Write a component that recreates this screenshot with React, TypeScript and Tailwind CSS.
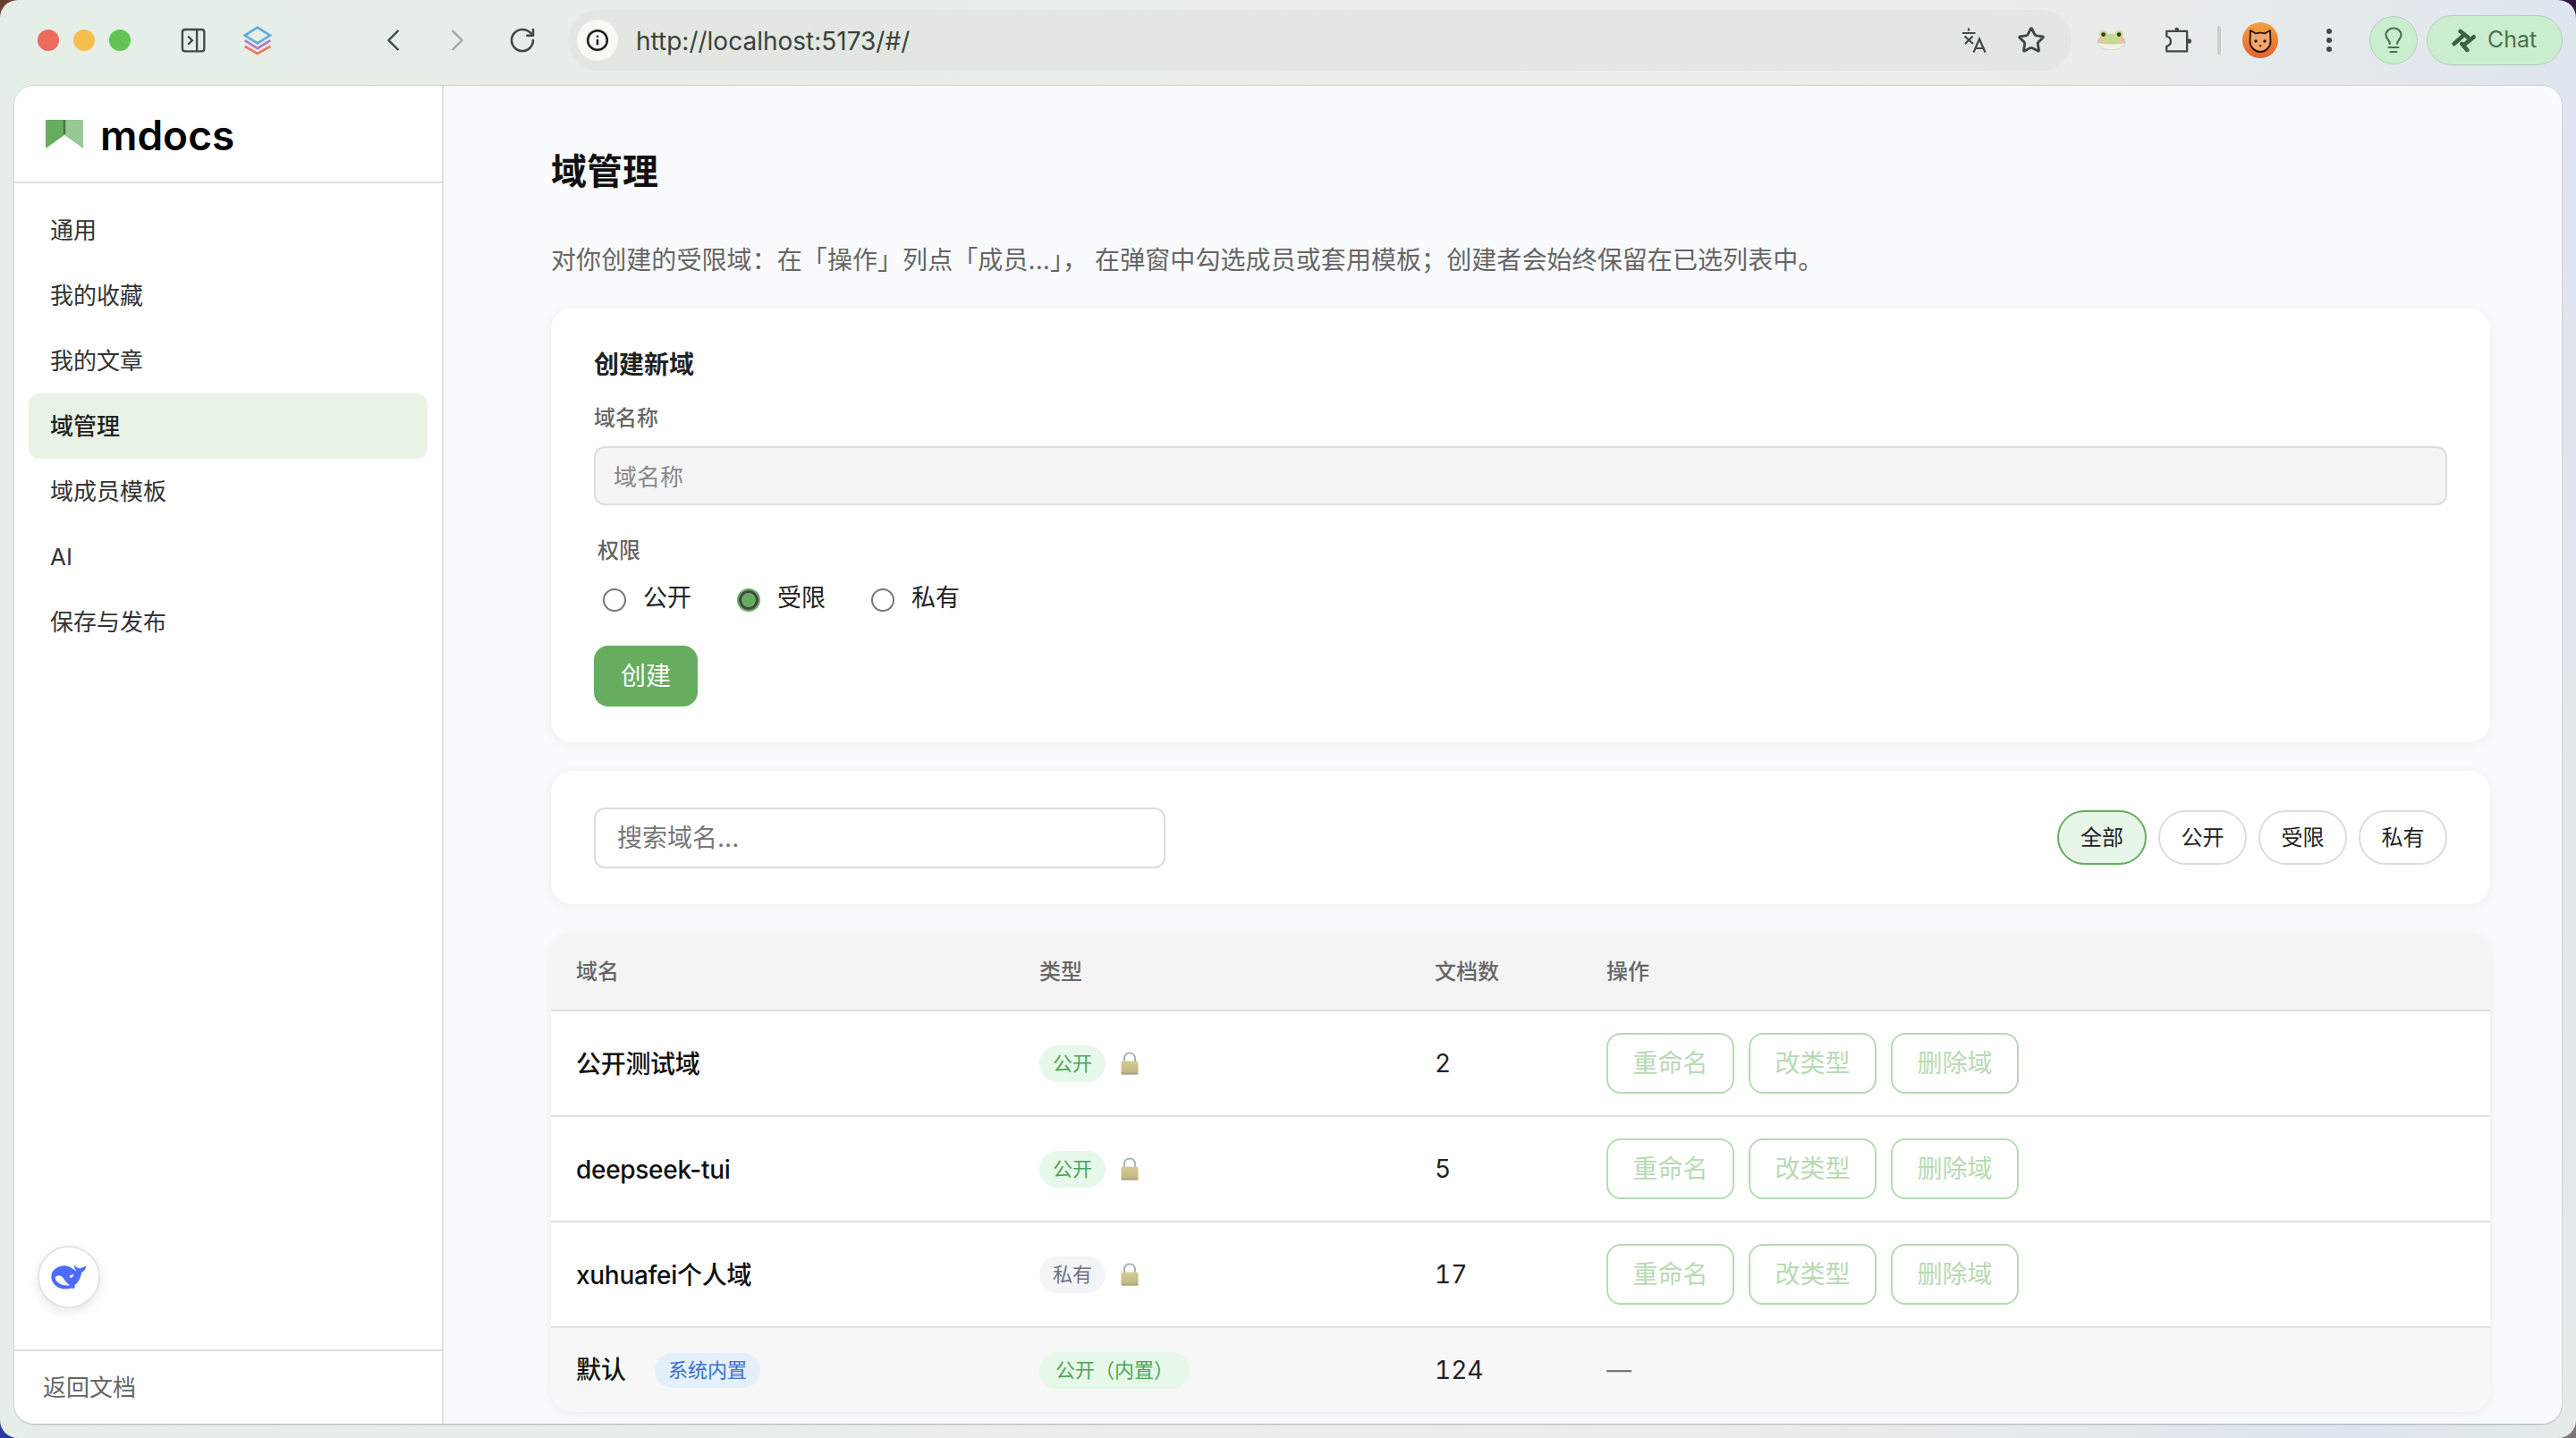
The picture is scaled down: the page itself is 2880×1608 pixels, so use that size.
import { Info, RotateCw, Star } from "lucide-react";

const navItems = ["通用", "我的收藏", "我的文章", "域管理", "域成员模板", "AI", "保存与发布"];

const domains = [
  { name: "公开测试域", type: "公开", isPublic: true, docs: "2" },
  { name: "deepseek-tui", type: "公开", isPublic: true, docs: "5" },
  { name: "xuhuafei个人域", type: "私有", isPublic: false, docs: "17" },
];

function SidebarToggleIcon() {
  return (
    <svg viewBox="35 35 85 85" className="w-[28px] h-[28px] ml-[56px]" fill="none" stroke="#3f4a40" strokeWidth="7">
      <rect x="41" y="41" width="74" height="74" rx="9" />
      <path d="M90 41V115" />
      <path d="M60 64L74 78L60 92" />
    </svg>
  );
}

function LayersIcon() {
  return (
    <svg viewBox="245 25 97 103" className="w-[32px] h-[34px] ml-[42px]" fill="none" strokeWidth="8">
      <path d="M293 33L336 60L293 87L250 60Z" stroke="#5eaee0" />
      <path d="M250 77L293 104L337 77" stroke="#b07cc6" />
      <path d="M250 97L293 122L337 97" stroke="#ee7a5f" />
    </svg>
  );
}

function TranslateIcon() {
  return (
    <svg viewBox="0 0 28 28" className="w-[28px] h-[28px] mr-[34px]" fill="none" stroke="#3f4a40" strokeWidth="2.2">
      <path d="M8 0.5V3.5M1 6H15.5" />
      <path d="M3.5 9.5L13 18M12.5 9.5L4 18" />
      <path d="M13.5 27.5L20 12.5L26.5 27.5M15.5 23H24.5" />
    </svg>
  );
}

function FrogIcon() {
  return (
    <svg viewBox="45 57 100 70" className="w-[33px] h-[23px] ml-[28px]">
      <circle cx="68" cy="74" r="14" fill="#c6d98f" />
      <circle cx="121" cy="74" r="14" fill="#c6d98f" />
      <ellipse cx="95" cy="98" rx="48" ry="27" fill="#c6d98f" />
      <path d="M47 100C62 108 128 108 143 100C140 118 118 126 95 126C72 126 50 118 47 100Z" fill="#f5f1e2" stroke="#c9ccb8" strokeWidth="2" />
      <circle cx="68" cy="74" r="7" fill="#2e3a22" />
      <circle cx="121" cy="74" r="7" fill="#2e3a22" />
      <ellipse cx="60" cy="94" rx="10" ry="7" fill="#f5b8b8" />
      <ellipse cx="130" cy="94" rx="10" ry="7" fill="#f5b8b8" />
    </svg>
  );
}

function PuzzleIcon() {
  return (
    <svg viewBox="270 40 95 95" className="w-[31px] h-[31px] ml-[43px]" fill="none" stroke="#3f4a40" strokeWidth="7">
      <path d="M277 58H347V127H277V109C296 106 296 80 277 76Z" strokeLinejoin="round" />
      <circle cx="312" cy="52" r="7" fill="#3f4a40" stroke="none" />
      <circle cx="354" cy="92" r="8" fill="#3f4a40" stroke="none" />
    </svg>
  );
}

function AvatarIcon() {
  return (
    <svg viewBox="0 0 40 40" className="w-[40px] h-[40px] ml-[24px]">
      <defs>
        <linearGradient id="avatarBg" x1="0" y1="0" x2="0" y2="1">
          <stop offset="0" stopColor="#f3a03f" />
          <stop offset="1" stopColor="#e6622d" />
        </linearGradient>
      </defs>
      <circle cx="20" cy="20" r="20" fill="url(#avatarBg)" />
      <path d="M9 9L15 12.5C18 11.5 22 11.5 25 12.5L31 9L31.5 22C31 28 26 33 20 33C14 33 9 28 8.5 22Z" fill="#f2a56c" stroke="#1f1510" strokeWidth="1.8" strokeLinejoin="round" />
      <circle cx="15" cy="21" r="1.7" fill="#1f1510" />
      <circle cx="25" cy="21" r="1.7" fill="#1f1510" />
      <path d="M18 25.5H22L20 27.5Z" fill="#1f1510" />
    </svg>
  );
}

function BulbIcon() {
  return (
    <svg viewBox="0 0 20 30" className="w-[20px] h-[30px]" fill="none" stroke="#4a7150" strokeWidth="2.2" strokeLinecap="round">
      <path d="M6 19C6 15 1.5 14 1.5 9C1.5 4.5 5.5 1.5 10 1.5C14.5 1.5 18.5 4.5 18.5 9C18.5 14 14 15 14 19" />
      <path d="M4.5 23H15.5M6.5 28H13.5" />
    </svg>
  );
}

function ChatIcon() {
  return (
    <svg viewBox="295 65 90 90" className="w-[30px] h-[30px] mr-[11px]" fill="none" stroke="#3f5f41" strokeWidth="14" strokeLinecap="round">
      <path d="M327 80L352 100" />
      <path d="M372 99L340 125" />
      <path d="M306 122L333 98" />
      <path d="M332 122L350 143" />
    </svg>
  );
}

function LogoIcon() {
  return (
    <svg viewBox="0 0 42 32" className="w-[42px] h-[32px] shrink-0">
      <path d="M0 0H21V17L0 32Z" fill="#66ad5f" />
      <path d="M21 0H42V32L21 17Z" fill="#98c893" />
      <path d="M21 0V16" stroke="#3d7d3a" strokeWidth="2.5" />
    </svg>
  );
}

function WhaleIcon() {
  return (
    <svg viewBox="40 32 140 100" className="w-[44px] h-[32px]">
      <path d="M48 75C52 52 78 40 100 42C115 44 130 56 137 62C133 55 128 48 128 40C135 48 145 50 150 52C155 48 165 45 172 42C170 52 165 62 155 65C152 85 145 100 130 112C135 118 128 124 118 122C100 127 75 124 62 112C52 102 46 90 48 75Z" fill="#4d6bfe" />
      <path d="M62 82C72 72 85 76 93 90C100 100 108 108 114 112C98 114 82 110 72 102C64 95 60 88 62 82Z" fill="#ffffff" />
      <path d="M112 78L127 71L124 81L116 86Z" fill="#ffffff" />
    </svg>
  );
}

function LockIcon() {
  return (
    <svg viewBox="0 0 20 26" className="w-[20px] h-[26px] ml-[17px]">
      <defs>
        <linearGradient id="lockBody" x1="0" y1="0" x2="0" y2="1">
          <stop offset="0" stopColor="#d6cc96" />
          <stop offset="1" stopColor="#bdb37c" />
        </linearGradient>
      </defs>
      <path d="M4 12V7.5C4 4 6.5 1.5 10 1.5C13.5 1.5 16 4 16 7.5V12" fill="none" stroke="#aab2c2" strokeWidth="2.2" />
      <rect x="0.5" y="10.5" width="19" height="15" rx="1.5" fill="url(#lockBody)" />
      <rect x="0.5" y="23.5" width="19" height="2" rx="1" fill="#a9a589" />
    </svg>
  );
}

function Toolbar() {
  return (
    <div className="flex items-center h-[95px] shrink-0 pl-[42px] pb-[6px]">
      <div className="w-[24px] h-[24px] rounded-full bg-[#ec6a5e]" />
      <div className="w-[24px] h-[24px] rounded-full bg-[#f4bf4f] ml-[16px]" />
      <div className="w-[24px] h-[24px] rounded-full bg-[#61c554] ml-[16px]" />
      <SidebarToggleIcon />
      <LayersIcon />
      <svg viewBox="0 0 14 24" className="w-[14px] h-[24px] ml-[129px]" fill="none" stroke="#3f4a40" strokeWidth="2.4">
        <path d="M12.5 1L1.5 12L12.5 23" />
      </svg>
      <svg viewBox="0 0 14 24" className="w-[14px] h-[24px] ml-[57px]" fill="none" stroke="#a3aba5" strokeWidth="2.4">
        <path d="M1.5 1L12.5 12L1.5 23" />
      </svg>
      <RotateCw className="w-[32px] h-[32px] ml-[50px] text-[#3f4a40]" strokeWidth={1.9} />
      <div className="flex items-center w-[1681px] h-[68px] ml-[35px] rounded-full bg-[#e2e7e1]">
        <div className="flex items-center justify-center w-[46px] h-[46px] ml-[10px] rounded-full bg-[#f7f9f3]">
          <Info className="w-[26px] h-[26px] text-[#1d1f1d]" strokeWidth={2.3} />
        </div>
        <div className="ml-[20px] pt-[2px] flex-1 text-[28px] leading-[40px] text-[#3b423c] font-['Inter',sans-serif]">http://localhost:5173/#/</div>
        <TranslateIcon />
        <Star className="w-[32px] h-[32px] mr-[29px] text-[#3f4a40]" strokeWidth={2.2} />
      </div>
      <FrogIcon />
      <PuzzleIcon />
      <div className="w-[4px] h-[32px] ml-[28px] rounded-full bg-[#c9cfca]" />
      <AvatarIcon />
      <div className="flex flex-col items-center gap-[4px] w-[12px] ml-[51px]">
        <div className="w-[6px] h-[6px] rounded-full bg-[#3f4a40]" />
        <div className="w-[6px] h-[6px] rounded-full bg-[#3f4a40]" />
        <div className="w-[6px] h-[6px] rounded-full bg-[#3f4a40]" />
      </div>
      <div className="flex items-center justify-center w-[54px] h-[54px] ml-[39px] rounded-full bg-[#cbedcf] border border-[#aed4b2]">
        <BulbIcon />
      </div>
      <div className="flex items-center w-[152px] h-[56px] ml-[10px] pl-[26px] rounded-full bg-[#cbedcf] border border-[#aed4b2]">
        <ChatIcon />
        <span className="text-[25px] text-[#4a7150] font-['Inter',sans-serif]">Chat</span>
      </div>
    </div>
  );
}

function Sidebar() {
  return (
    <aside className="flex flex-col w-[480px] shrink-0 bg-white border-r-2 border-[#e0e0e0]">
      <div className="flex items-center gap-[19px] h-[109px] pl-[35px] border-b-2 border-[#e0e0e0] shrink-0">
        <LogoIcon />
        <span className="pt-[2px] text-[46px] leading-[60px] font-semibold text-black">mdocs</span>
      </div>
      <nav className="flex flex-col flex-1 pt-[16px] px-[16px]">
        {navItems.map((item) => (
          <div
            key={item}
            className={
              item === "域管理"
                ? "flex items-center h-[73px] pl-[24px] rounded-[12px] bg-[#e8f3e6] text-[26px] font-medium text-[#222]"
                : "flex items-center h-[73px] pl-[24px] text-[26px] text-[#333]"
            }
          >
            {item}
          </div>
        ))}
      </nav>
      <div className="flex items-center justify-center w-[70px] h-[70px] ml-[26px] mb-[46px] rounded-full bg-white border-2 border-[#e4e4e4] shadow-[0_4px_12px_rgba(0,0,0,0.1)]">
        <WhaleIcon />
      </div>
      <div className="flex items-center h-[83px] pl-[32px] border-t-2 border-[#e0e0e0] text-[26px] text-[#666]">返回文档</div>
    </aside>
  );
}

function CreateCard() {
  return (
    <section className="mt-[34px] h-[485px] pt-[43px] px-[48px] rounded-[24px] bg-white shadow-[0_2px_12px_rgba(0,0,0,0.05)]">
      <h2 className="text-[28px] leading-[40px] font-semibold text-[#222]">创建新域</h2>
      <div className="mt-[24px] text-[24px] leading-[32px] font-medium text-[#666]">域名称</div>
      <input
        placeholder="域名称"
        className="block w-full h-[66px] mt-[15px] px-[20px] pt-[2px] rounded-[12px] bg-[#f5f5f5] border-2 border-[#ddd] text-[26px] placeholder:text-[#888]"
      />
      <div className="mt-[35px] ml-[4px] text-[24px] leading-[32px] font-medium text-[#666]">权限</div>
      <div className="flex items-center h-[40px] mt-[19px] ml-[10px] text-[27px] text-[#222]">
        <input type="radio" readOnly checked={false} className="appearance-none w-[26px] h-[26px] rounded-full border-2 border-[#777]" />
        <span className="ml-[19px] mb-[4px]">公开</span>
        <input type="radio" readOnly checked className="appearance-none w-[26px] h-[26px] ml-[51px] rounded-full border-2 border-[#66ad5f] bg-[#66ad5f] shadow-[inset_0_0_0_3px_#444]" />
        <span className="ml-[19px] mb-[4px]">受限</span>
        <input type="radio" readOnly checked={false} className="appearance-none w-[26px] h-[26px] ml-[51px] rounded-full border-2 border-[#777]" />
        <span className="ml-[19px] mb-[4px]">私有</span>
      </div>
      <button className="block w-[116px] h-[68px] mt-[31px] rounded-[16px] bg-[#66ad5f] text-[28px] text-white">创建</button>
    </section>
  );
}

function FilterCard() {
  return (
    <section className="flex items-center justify-between h-[149px] mt-[32px] px-[48px] rounded-[24px] bg-white shadow-[0_2px_12px_rgba(0,0,0,0.05)]">
      <input
        placeholder="搜索域名..."
        className="w-[639px] h-[68px] px-[24px] rounded-[12px] bg-white border-2 border-[#ddd] text-[28px] placeholder:text-[#777]"
      />
      <div className="flex gap-[13px]">
        {["全部", "公开", "受限", "私有"].map((label) => (
          <button
            key={label}
            className={
              label === "全部"
                ? "w-[100px] h-[61px] rounded-full bg-[#e8f5e9] border-2 border-[#66ad5f] text-[24px] text-[#222]"
                : "w-[99px] h-[61px] rounded-full bg-white border-2 border-[#ddd] text-[24px] text-[#222]"
            }
          >
            {label}
          </button>
        ))}
      </div>
    </section>
  );
}

function DomainRow({ name, type, isPublic, docs }: { name: string; type: string; isPublic: boolean; docs: string }) {
  return (
    <div className="grid grid-cols-[516px_472px_192px_1fr] items-center h-[118px] border-b-2 border-[#e0e0e0] bg-white">
      <div className="pl-[28px] pt-[2px] text-[28px] tracking-[-0.3px] font-medium text-[#111]">{name}</div>
      <div className="flex items-center pl-[30px]">
        <span
          className={
            isPublic
              ? "flex items-center justify-center w-[74px] h-[41px] rounded-full bg-[#e6f8e9] text-[22px] text-[#4ca553]"
              : "flex items-center justify-center w-[74px] h-[41px] rounded-full bg-[#f3f4f6] text-[22px] text-[#6b7280]"
          }
        >
          {type}
        </span>
        <LockIcon />
      </div>
      <div className="text-[28px] tabular-nums text-[#222]">{docs}</div>
      <div className="flex gap-[16px]">
        {["重命名", "改类型", "删除域"].map((label) => (
          <button key={label} className="w-[143px] h-[68px] rounded-[16px] border-2 border-[#b8dab5] text-[28px] text-[#b8dab5]">
            {label}
          </button>
        ))}
      </div>
    </div>
  );
}

function DomainTable() {
  return (
    <section className="mt-[33px] rounded-[24px] overflow-hidden shadow-[0_2px_12px_rgba(0,0,0,0.06)]">
      <div className="grid grid-cols-[516px_472px_192px_1fr] items-center h-[87px] border-b-2 border-[#e0e0e0] bg-[#f4f4f4] text-[24px] font-medium text-[#666]">
        <div className="pl-[28px]">域名</div>
        <div className="pl-[30px]">类型</div>
        <div>文档数</div>
        <div>操作</div>
      </div>
      {domains.map((domain) => (
        <DomainRow key={domain.name} {...domain} />
      ))}
      <div className="grid grid-cols-[516px_472px_192px_1fr] items-center h-[94px] bg-[#f7f7f7]">
        <div className="flex items-center pl-[28px]">
          <span className="text-[28px] font-medium text-[#111]">默认</span>
          <span className="flex items-center justify-center w-[118px] h-[39px] ml-[32px] rounded-full bg-[#e3f0fc] text-[22px] text-[#3b6fc9]">系统内置</span>
        </div>
        <div className="pl-[30px]">
          <span className="flex items-center justify-center w-[168px] h-[41px] rounded-full bg-[#e6f8e9] text-[22px] text-[#4ca553]">公开（内置）</span>
        </div>
        <div className="text-[28px] tabular-nums text-[#222]">124</div>
        <div className="text-[28px] text-[#777]">—</div>
      </div>
    </section>
  );
}

export default function App() {
  return (
    <div className="w-[2880px] h-[1608px] overflow-hidden bg-[conic-gradient(#2b1740_0_25%,#777_25%_50%,#2c3aa0_50%_75%,#6a4030_75%_100%)] font-['Inter','Noto_Sans_CJK_SC',sans-serif]">
      <div className="flex flex-col w-full h-full rounded-[20px] bg-[linear-gradient(100deg,#e6eee8_0%,#ebefe9_70%,#dfe5ef_92%,#e4ebe8_100%)] pb-[16px]">
        <Toolbar />
        <div className="flex flex-1 min-h-0 mx-[16px] rounded-[22px] overflow-hidden border-t border-[#cfd4d0] shadow-[0_1px_2px_rgba(0,0,0,0.25)]">
          <Sidebar />
          <main className="flex-1 min-w-0 pt-[68px] pl-[120px] pr-[80px] bg-[#f9fafc]">
            <h1 className="text-[40px] leading-[56px] font-semibold text-[#111]">域管理</h1>
            <p className="mt-[51px] text-[28px] leading-[40px] tracking-[0.08px] text-[#666]">对你创建的受限域：在「操作」列点「成员...」， 在弹窗中勾选成员或套用模板；创建者会始终保留在已选列表中。</p>
            <CreateCard />
            <FilterCard />
            <DomainTable />
          </main>
        </div>
      </div>
    </div>
  );
}
